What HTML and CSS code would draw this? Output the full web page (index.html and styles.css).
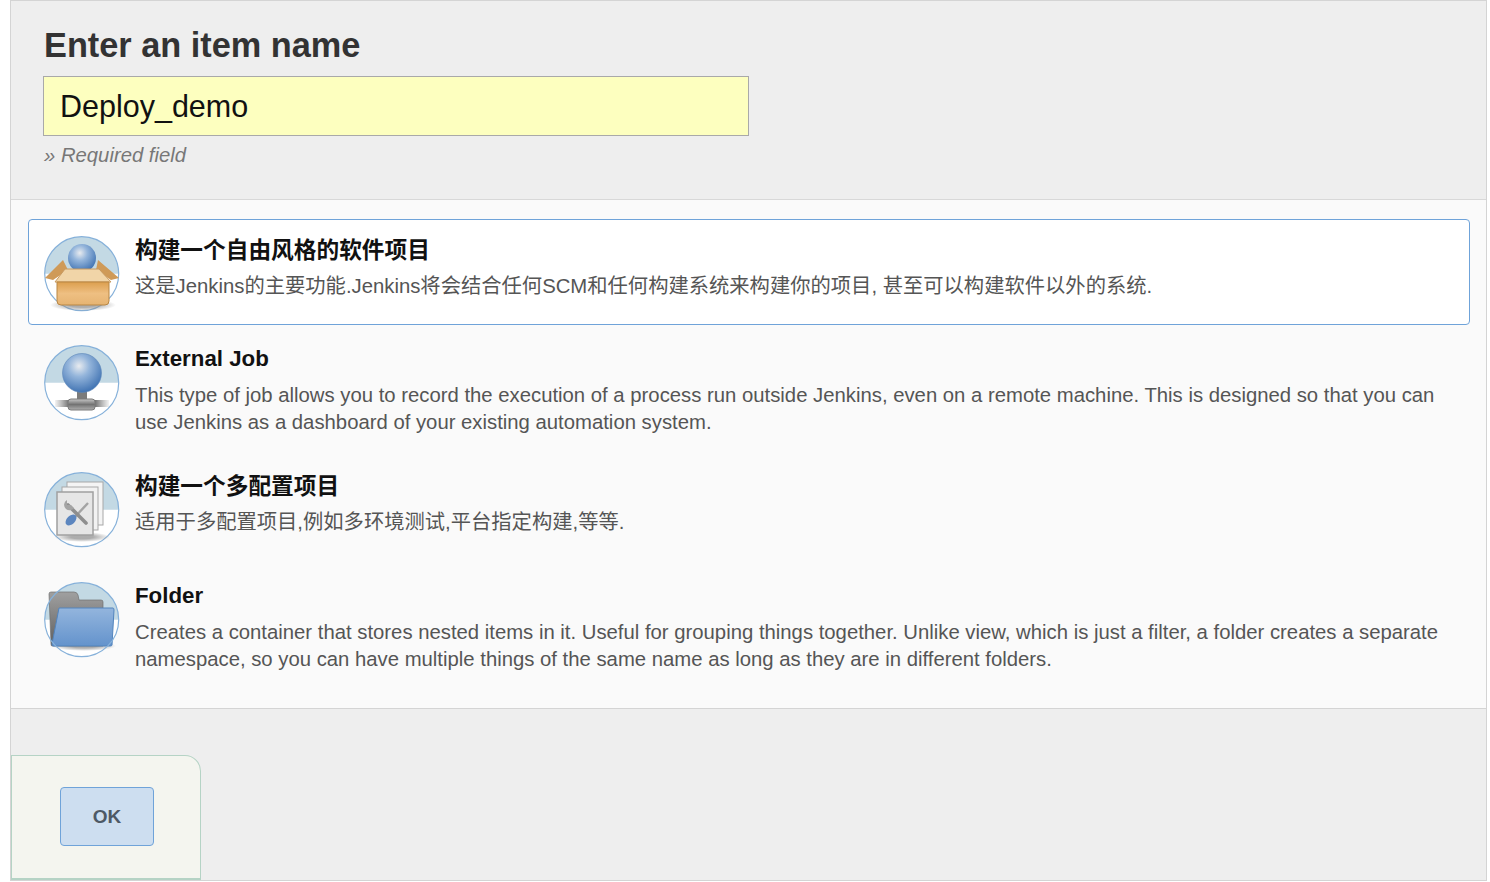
FILE: index.html
```html
<!DOCTYPE html>
<html lang="zh">
<head>
<meta charset="utf-8">
<title>New Item</title>
<link rel="stylesheet" href="styles.css">
</head>
<body>
<svg class="defs" width="0" height="0" aria-hidden="true">
  <defs>
    <radialGradient id="ball" cx="0.42" cy="0.32" r="0.68">
      <stop offset="0" stop-color="#e8ebef"/>
      <stop offset="0.4" stop-color="#94b5db"/>
      <stop offset="1" stop-color="#4274b3"/>
    </radialGradient>
    <linearGradient id="boxg" x1="0" y1="0" x2="0" y2="1">
      <stop offset="0" stop-color="#dc9f4e"/>
      <stop offset="0.5" stop-color="#eebf82"/>
      <stop offset="1" stop-color="#e6b472"/>
    </linearGradient>
    <linearGradient id="folderg" x1="0" y1="0" x2="0" y2="1">
      <stop offset="0" stop-color="#93b5dd"/>
      <stop offset="1" stop-color="#6493cc"/>
    </linearGradient>
    <linearGradient id="foldback" x1="0" y1="0" x2="0" y2="1">
      <stop offset="0" stop-color="#a0a0a0"/>
      <stop offset="1" stop-color="#5e5e5e"/>
    </linearGradient>
    <linearGradient id="pipe" x1="0" y1="0" x2="0" y2="1">
      <stop offset="0" stop-color="#c8c8c8"/>
      <stop offset="0.5" stop-color="#737373"/>
      <stop offset="1" stop-color="#b0b0b0"/>
    </linearGradient>
    <linearGradient id="pipefade" x1="0" y1="0" x2="1" y2="0">
      <stop offset="0" stop-color="#888" stop-opacity="0.1"/>
      <stop offset="0.25" stop-color="#777"/>
      <stop offset="0.75" stop-color="#777"/>
      <stop offset="1" stop-color="#888" stop-opacity="0.1"/>
    </linearGradient>
    <radialGradient id="shadow">
      <stop offset="0.4" stop-color="#8a8a8a" stop-opacity="0.7"/>
      <stop offset="1" stop-color="#8a8a8a" stop-opacity="0"/>
    </radialGradient>
    <symbol id="disc" viewBox="0 0 76 76">
      <circle cx="37.7" cy="37.7" r="37" fill="#fff"/>
      <path d="M.7 37.7a37 37 0 0 1 74 0z" fill="#c3d9e4"/>
    </symbol>
    <symbol id="ring" viewBox="0 0 76 76">
      <circle cx="37.7" cy="37.7" r="37" fill="none" stroke="#86b1da" stroke-width="1.2"/>
    </symbol>
  </defs>
</svg>

<main class="panel">
  <header class="name-section">
    <h1 class="name-label">Enter an item name</h1>
    <input class="name-input" type="text" value="Deploy_demo">
    <p class="required">» Required field</p>
  </header>

  <section class="items">
    <article class="item selected">
      <svg class="icon" viewBox="0 0 76 76">
        <use href="#disc" width="76" height="76"/>
        <use href="#ring" width="76" height="76"/>
        <ellipse cx="39" cy="69" rx="33" ry="6" fill="url(#shadow)"/>
        <circle cx="38" cy="22" r="14" fill="url(#ball)"/>
        <path d="M19 24 L1 42 L9 44 L24 34z M54 24 L75 42 L67 44 L52 34z" fill="#cf9a58"/>
        <path d="M21 33 H55 L67 46 H11z" fill="#f1d5a8" stroke="#c89a60"/>
        <path d="M13 46 H65 V65 Q65 69 61 69 H17 Q13 69 13 65z" fill="url(#boxg)" stroke="#b98744"/>
      </svg>
      <div class="item-text">
        <h2 class="item-title">构建一个自由风格的软件项目</h2>
        <p class="item-desc">这是Jenkins的主要功能.Jenkins将会结合任何SCM和任何构建系统来构建你的项目, 甚至可以构建软件以外的系统.</p>
      </div>
    </article>

    <article class="item">
      <svg class="icon" viewBox="0 0 76 76">
        <use href="#disc" width="76" height="76"/>
        <use href="#ring" width="76" height="76"/>
        <rect x="11" y="55" width="54" height="7" fill="url(#pipefade)"/>
        <rect x="33" y="46" width="10" height="10" fill="#7b7b7b"/>
        <rect x="24" y="54" width="27" height="11" rx="3" fill="url(#pipe)" stroke="#7a7a7a"/>
        <circle cx="38" cy="28" r="19.5" fill="url(#ball)" stroke="#5d86b8" stroke-width="0.6"/>
      </svg>
      <div class="item-text">
        <h2 class="item-title latin">External Job</h2>
        <p class="item-desc">This type of job allows you to record the execution of a process run outside Jenkins, even on a remote machine. This is designed so that you can use Jenkins as a dashboard of your existing automation system.</p>
      </div>
    </article>

    <article class="item">
      <svg class="icon" viewBox="0 0 76 76">
        <use href="#disc" width="76" height="76"/>
        <use href="#ring" width="76" height="76"/>
        <ellipse cx="38" cy="65" rx="28" ry="5" fill="url(#shadow)"/>
        <rect x="23" y="10" width="36" height="43" fill="#f4f4f4" stroke="#a8a8a8"/>
        <rect x="18" y="15" width="36" height="43" fill="#f2f2f2" stroke="#a8a8a8"/>
        <rect x="13" y="20" width="36" height="43" fill="#e6e6e6" stroke="#a0a0a0" stroke-width="1.5"/>
        <path d="M44 31 L30 46" stroke="#a3a3a3" stroke-width="2.4" fill="none"/>
        <path d="M24 33 L42 51" stroke="#8e8e8e" stroke-width="3.6" stroke-linecap="round" fill="none"/>
        <path d="M23 28 A5.5 5.5 0 0 0 22 37 A5.5 5.5 0 0 0 30 36 L27 33 L23 33z" fill="#a3a3a3"/>
        <ellipse cx="27" cy="48" rx="6.5" ry="4.2" fill="#5c86bf" transform="rotate(-45 27 48)"/>
      </svg>
      <div class="item-text">
        <h2 class="item-title">构建一个多配置项目</h2>
        <p class="item-desc">适用于多配置项目,例如多环境测试,平台指定构建,等等.</p>
      </div>
    </article>

    <article class="item">
      <svg class="icon" viewBox="0 0 76 76">
        <use href="#disc" width="76" height="76"/>
        <ellipse cx="40" cy="64" rx="32" ry="5" fill="url(#shadow)"/>
        <path d="M5 12 Q5 10 7 10 H30 Q33 10 34 13 L35 18 H57 Q59 18 59 20 V64 H8 Q7 64 7 62z" fill="url(#foldback)" stroke="#707070" stroke-width="0.7"/>
        <path d="M15 26 H69 Q70 26 70 28 L68 63 Q68 64 66 64 H9 Q8 64 8 62z" fill="url(#folderg)" stroke="#5284bd"/>
        <use href="#ring" width="76" height="76"/>
      </svg>
      <div class="item-text">
        <h2 class="item-title latin">Folder</h2>
        <p class="item-desc">Creates a container that stores nested items in it. Useful for grouping things together. Unlike view, which is just a filter, a folder creates a separate namespace, so you can have multiple things of the same name as long as they are in different folders.</p>
      </div>
    </article>
  </section>

  <footer class="footer">
    <div class="ok-tab">
      <button class="ok-button" type="button">OK</button>
    </div>
  </footer>
</main>
</body>
</html>
```

FILE: styles.css
```css
* { box-sizing: border-box; }

html, body { height: 100%; }

body {
  margin: 0;
  background: #fff;
  color: #333;
  font-family: "Liberation Sans", "Noto Sans CJK SC", sans-serif;
  padding-left: 10px;
  padding-right: 3px;
  overflow: hidden;
}

.defs { position: absolute; }

.panel {
  height: 881px;
  display: flex;
  flex-direction: column;
  background: #eee;
  border: 1px solid #d4d4d4;
}

.name-section {
  height: 199px;
  flex: none;
  padding: 24px 32px 0;
  border-bottom: 1px solid #d8d8d8;
}

.name-label {
  margin: 0 0 11px 1px;
  font-size: 34.3px;
  line-height: 40px;
  font-weight: 700;
  color: #333;
}

.name-input {
  display: block;
  width: 706px;
  height: 60px;
  padding: 0 16px;
  border: 1px solid #a9a9a9;
  border-radius: 0;
  background: #fdffbf;
  font-family: inherit;
  font-size: 30.5px;
  color: #111;
  outline: none;
}

.required {
  margin: 6px 0 0 1px;
  font-size: 20.3px;
  line-height: 26px;
  font-style: italic;
  color: #777;
}

.items {
  height: 509px;
  flex: none;
  display: flex;
  flex-direction: column;
  gap: 3px;
  padding: 19px 16px 0 17px;
  background: #fafafa;
  border-bottom: 1px solid #d4d4d4;
}

.item {
  display: flex;
  gap: 15px;
  min-height: 107px;
  padding: 16px 15px 12px;
  border: 1px solid transparent;
  border-radius: 4px;
}

.item.selected {
  min-height: 106px;
  background: #fff;
  border-color: #6fa3d9;
}

.icon {
  flex: none;
  width: 76px;
  height: 76px;
}

.item-text {
  min-width: 0;
  padding: 1px 0 3px;
}

.item-title {
  margin: -1px 0 9px;
  font-size: 22.7px;
  line-height: 28px;
  font-weight: 700;
  color: #111;
}

.item-title.latin {
  margin: -1px 0 9px;
  font-size: 22.3px;
}

.item-desc {
  margin: 0;
  font-size: 20.31px;
  line-height: 27px;
  color: #555;
}

.footer {
  flex: 1;
  display: flex;
  align-items: flex-end;
}

.ok-tab {
  width: 190px;
  height: 125px;
  display: flex;
  align-items: center;
  justify-content: center;
  padding-left: 2px;
  padding-bottom: 1px;
  background: #f4f5ef;
  border: 1px solid #b5d3c5;
  border-bottom-width: 2px;
  border-top-right-radius: 16px;
}

.ok-button {
  width: 94px;
  height: 59px;
  padding: 0;
  background: #cddef0;
  border: 1px solid #6fa3d9;
  border-radius: 4px;
  font-family: inherit;
  font-size: 19px;
  font-weight: 700;
  color: #4d5966;
}
```
